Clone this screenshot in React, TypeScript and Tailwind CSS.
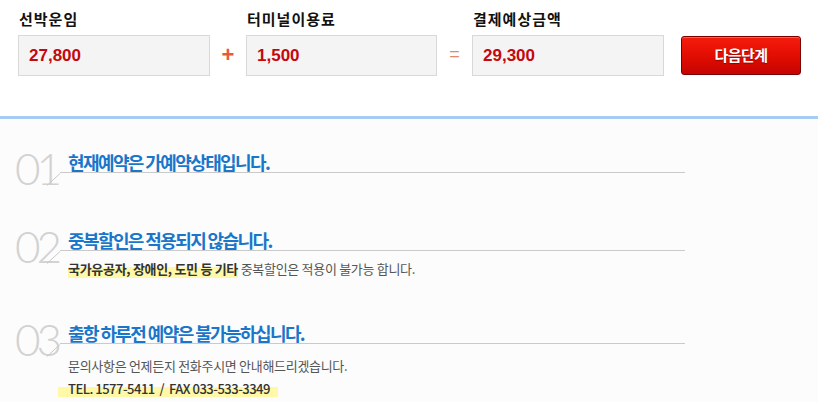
import React from 'react'

const KR = "font-['Noto_Sans_CJK_KR',sans-serif]"

interface FieldProps {
  label: string
  value: string
  width: string
}

const Field: React.FC<FieldProps> = ({ label, value, width }) => (
  <div className="flex flex-col">
    <div
      className={`${KR} pl-px text-[15px] leading-[18px] font-bold tracking-[1px] text-[#111]`}
    >
      {label}
    </div>
    <div
      className={`mt-[7px] flex h-[41px] ${width} items-center border border-[#d9d9d9] bg-[#f4f4f4] pl-[10px]`}
    >
      <span className="font-['Liberation_Sans',Arial,sans-serif] text-[17px] font-bold text-[#c4080c]">
        {value}
      </span>
    </div>
  </div>
)

interface NoticeProps {
  num: string
  title: string
  children?: React.ReactNode
}

const Notice: React.FC<NoticeProps> = ({ num, title, children }) => (
  <div className="flex items-start pl-[15px]">
    <div className="relative h-[21px] w-[45px] shrink-0">
      <div className="mt-[-6px] font-['Lato',sans-serif] text-[44px] leading-none font-light tracking-[-4px] text-[#d2d2d2]">
        {num}
      </div>
      <svg
        className="absolute top-[21px] left-[32px]"
        width="13"
        height="13"
        viewBox="0 0 13 13"
      >
        <line x1="0" y1="12.5" x2="13" y2="0.5" stroke="#c8c8c8" strokeWidth="1" />
      </svg>
    </div>
    <div className="w-[625px]">
      <div
        className={`${KR} border-b border-[#cacaca] pl-2 text-[18px] leading-[20px] font-bold tracking-[-1.6px] text-[#1a76c9]`}
      >
        {title}
      </div>
      {children}
    </div>
  </div>
)

const Mark: React.FC<{ children: React.ReactNode; className?: string }> = ({
  children,
  className = '',
}) => (
  <span
    className={`bg-[linear-gradient(transparent_40%,#fff8a6_40%)] ${className}`}
  >
    {children}
  </span>
)

export default function App() {
  return (
    <div className="h-[402px] w-[825px] overflow-hidden bg-white">
      <div className="flex h-[116px] items-start px-[18px] pt-[10px]">
        <div className="flex items-end">
          <Field label="선박운임" value="27,800" width="w-[192px]" />
          <div className="flex h-[41px] w-[36px] items-center justify-center pb-[2px] font-['Liberation_Sans',Arial,sans-serif] text-[22px] font-bold text-[#ea5a32]">
            +
          </div>
          <Field label="터미널이용료" value="1,500" width="w-[191px]" />
          <div className="flex h-[41px] w-[35px] items-center justify-center pb-[2px] font-['Liberation_Sans',Arial,sans-serif] text-[18px] text-[#e2876a]">
            =
          </div>
          <Field label="결제예상금액" value="29,300" width="w-[192px]" />
          <button
            className={`${KR} mb-px ml-[17px] h-[39px] w-[120px] rounded-[3px] border border-[#7a0000] bg-[linear-gradient(#f51c0c,#e00c02_55%,#c50400)] text-[15px] font-bold tracking-[-0.5px] text-white shadow-[inset_0_1px_0_rgba(255,140,120,0.6)] [text-shadow:0_1px_1px_rgba(90,0,0,0.6)]`}
          >
            다음단계
          </button>
        </div>
      </div>
      <div className="h-[3px] w-[818px] bg-[#a7ccf4]" />
      <div className="h-[283px] w-[818px] bg-[#fcfcfc] pt-[33px]">
        <Notice num="01" title="현재예약은 가예약상태입니다." />
        <div className="h-[57px]" />
        <Notice num="02" title="중복할인은 적용되지 않습니다.">
          <div
            className={`${KR} mt-[9px] pl-2 text-[13px] leading-[18px] tracking-[-0.3px] text-[#555]`}
          >
            <Mark className="font-bold text-[#333]">
              국가유공자, 장애인, 도민 등 기타
            </Mark>{' '}
            중복할인은 적용이 불가능 합니다.
          </div>
        </Notice>
        <div className="h-[45px]" />
        <Notice num="03" title="출항 하루전 예약은 불가능하십니다.">
          <div
            className={`${KR} mt-[13px] pl-2 text-[13px] leading-[18px] tracking-[-0.3px] text-[#555]`}
          >
            문의사항은 언제든지 전화주시면 안내해드리겠습니다.
          </div>
          <div className="mt-px -ml-[2px]">
            <Mark
              className={`${KR} inline-block w-[220px] pl-[10px] text-[13px] leading-[17px] font-medium tracking-[-0.5px] whitespace-nowrap text-[#333]`}
            >
              TEL. 1577-5411 &nbsp;/ &nbsp;FAX 033-533-3349
            </Mark>
          </div>
        </Notice>
      </div>
    </div>
  )
}
